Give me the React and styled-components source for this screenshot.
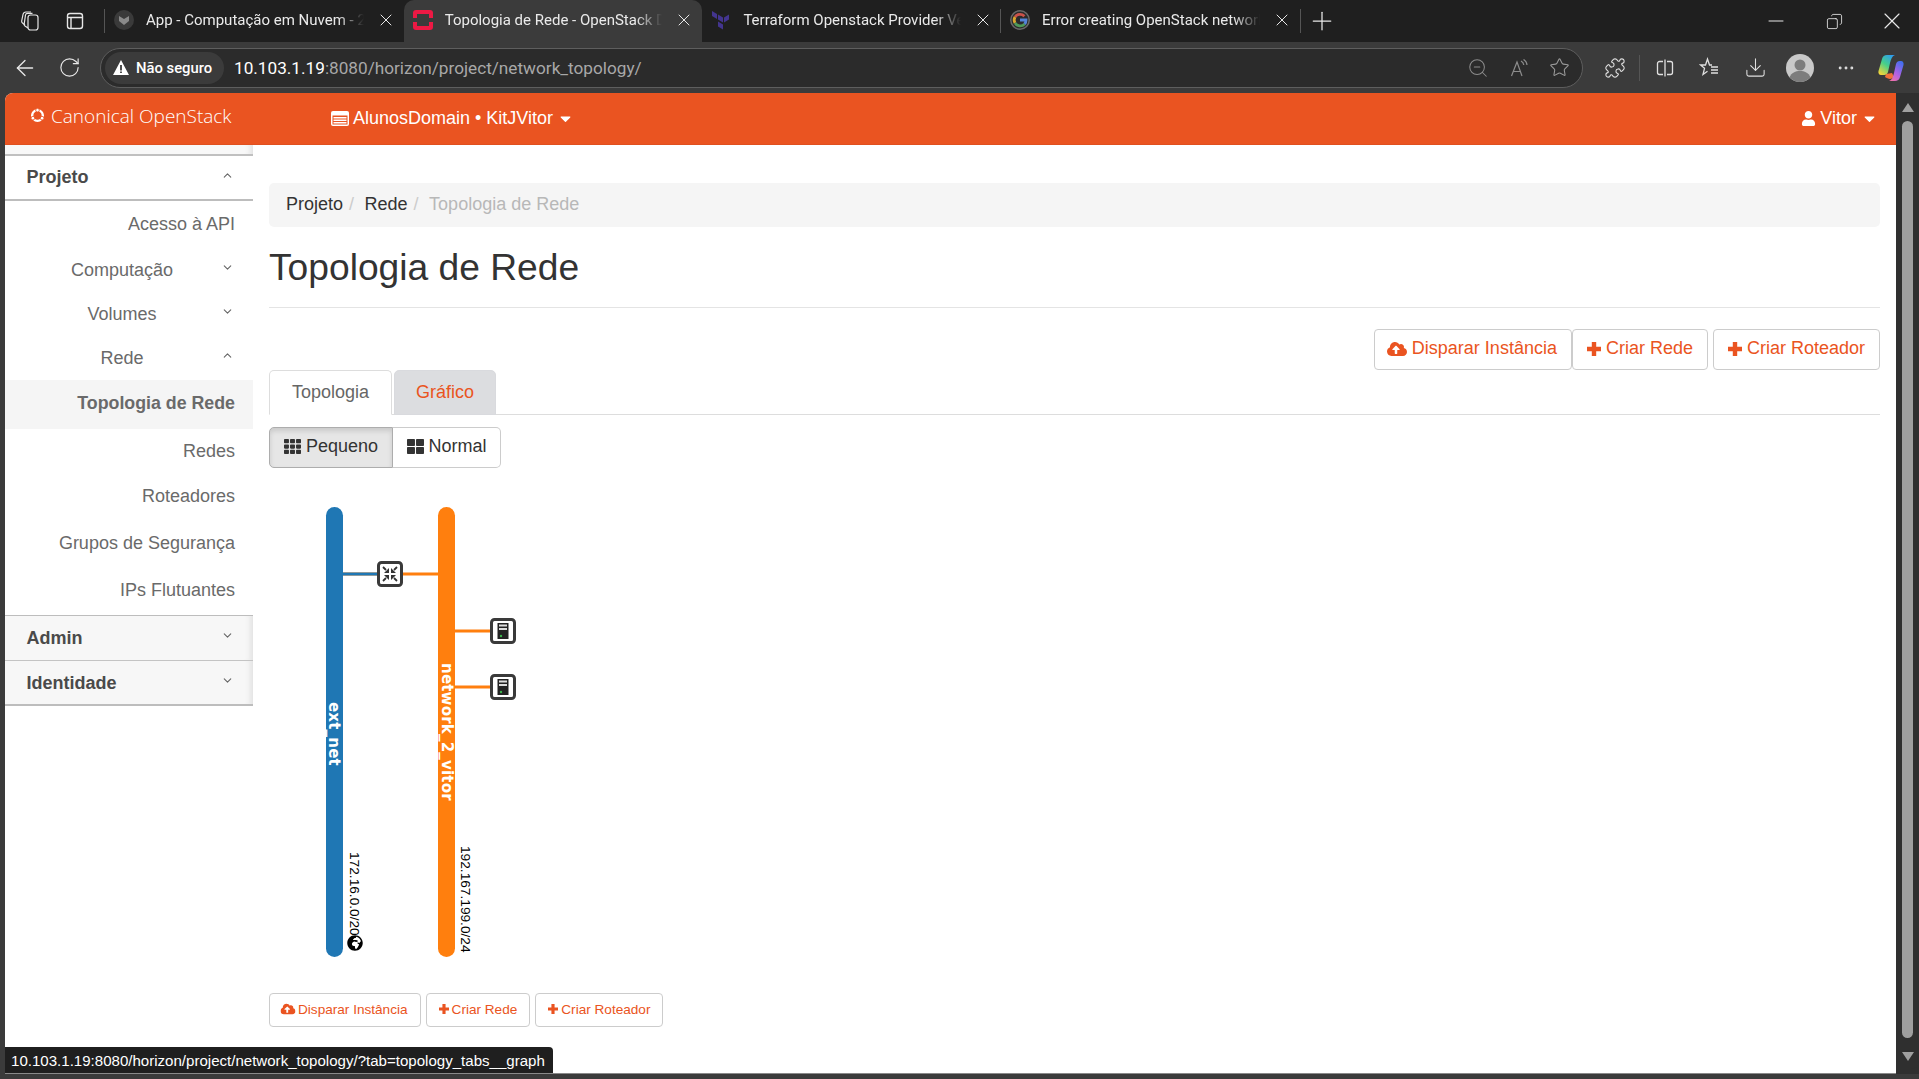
import React from "react";
import styled, { createGlobalStyle } from "styled-components";
import {
  FaCaretDown,
  FaCloudUploadAlt,
  FaGlobeAfrica,
  FaTh,
  FaThLarge,
  FaUser,
} from "react-icons/fa";
import { FiChevronDown, FiChevronUp } from "react-icons/fi";
import {
  ArrowLeft,
  Copy,
  Download,
  Minus,
  MoreHorizontal,
  Plus,
  Puzzle,
  RotateCw,
  Star,
  X,
  ZoomOut,
} from "lucide-react";

const ORANGE = "#ea5421";

const GlobalStyle = createGlobalStyle`
  html, body {
    margin: 0;
    height: 100%;
    overflow: hidden;
    background: #3b3b3b;
    font-family: "Liberation Sans", Arial, sans-serif;
  }
  * { box-sizing: border-box; }
`;

const TabsIcon = () => (
  <svg width="20" height="22" viewBox="0 0 20 22" fill="none" stroke="#e6e6e6" strokeWidth="1.2">
    <rect x="8" y="5" width="10" height="15" rx="2.5" />
    <path d="M8 18 5 16c-.8-.6-1-1.300-.8-2.200L5.500 5c.2-1 1-1.600 2-1.600h5" />
    <path d="M5 15 2.500 13c-.8-.6-1-1.300-.8-2.200L3 4.500C3.200 3.500 4 2 6 2h5" />
  </svg>
);

const SidebarIcon = () => (
  <svg width="20" height="20" viewBox="0 0 20 20" fill="none" stroke="#e6e6e6" strokeWidth="1.4">
    <rect x="2.500" y="2.500" width="15" height="15" rx="2.500" />
    <path d="M2.500 6.500h15M6 6.500v11" />
  </svg>
);

const OpenStackFavicon = () => (
  <svg width="20" height="20" viewBox="0 0 20 20">
    <rect width="20" height="20" rx="3" fill="#ed1944" />
    <rect x="4" y="4" width="12" height="12" fill="#3b3b3b" />
    <rect x="0" y="8" width="5" height="4" fill="#3b3b3b" />
    <rect x="15" y="8" width="5" height="4" fill="#3b3b3b" />
  </svg>
);

const VFavicon = () => (
  <svg width="20" height="20" viewBox="0 0 20 20">
    <circle cx="10" cy="10" r="10" fill="#3a3a3a" />
    <path d="M5 6l5 3v6L5 11zM15 6l-5 3v6l5-4z" fill="#8a8a8a" />
  </svg>
);

const TerraformFavicon = () => (
  <svg width="20" height="20" viewBox="0 0 20 20" fill="#43358f">
    <path d="M1 1l5 3v5L1 6zM7 4.500l5 3v5l-5-3zM13 7.500l5-3v5l-5 3zM7 11.500l5 3v5l-5-3z" />
  </svg>
);

const GoogleFavicon = () => (
  <svg width="20" height="20" viewBox="0 0 20 20" fill="none" strokeWidth="2.800">
    <circle cx="10" cy="10" r="10" fill="#6a6a6a" />
    <circle cx="10" cy="10" r="8.500" fill="#2b2b2b" />
    <path d="M14.400 6.200A6 6 0 0 0 5 7" stroke="#c9524a" />
    <path d="M5 7a6 6 0 0 0 0 6" stroke="#d9a52e" />
    <path d="M5 13a6 6 0 0 0 9.600 1" stroke="#4f9a5a" />
    <path d="M14.600 14A6 6 0 0 0 16 10H10" stroke="#5484d8" />
  </svg>
);

const ReadAloudIcon = () => (
  <svg width="20" height="20" viewBox="0 0 20 20" fill="none" stroke="#8c8c8c" strokeWidth="1.200">
    <path d="M2.500 18 8 4l5 14M4.300 13.500h7.400" />
    <path d="M12 3c1.600.8 2.600 2.400 2.800 4M14.500 1.500c2 1.200 3.300 3.300 3.500 5.500" />
  </svg>
);

const SplitIcon = () => (
  <svg width="20" height="20" viewBox="0 0 20 20" fill="none" stroke="#e0e0e0" strokeWidth="1.300">
    <path d="M8 3.500H4.500a2 2 0 0 0-2 2v9a2 2 0 0 0 2 2H8M12 3.500h3.500a2 2 0 0 1 2 2v9a2 2 0 0 1-2 2H12M10 1.500v17" />
  </svg>
);

const FavoritesIcon = () => (
  <svg width="21" height="21" viewBox="0 0 21 21" fill="none" stroke="#e0e0e0" strokeWidth="1.300">
    <path d="M13 8h-2.500L8.500 2 6.500 8H1.500l4 3.300L4 17.500l4.500-3.200" />
    <path d="M12 10h7M12 13h7M12 16h7" />
  </svg>
);

const ProfileAvatar = () => (
  <svg width="28" height="28" viewBox="0 0 28 28">
    <circle cx="14" cy="14" r="14" fill="#c9c9c9" />
    <circle cx="14" cy="11" r="5.500" fill="#7d7d7d" />
    <path d="M3.500 23.200c2-4.400 6-6.200 10.500-6.200s8.500 1.800 10.500 6.200A14 14 0 0 1 14 28a14 14 0 0 1-10.500-4.800z" fill="#7d7d7d" />
  </svg>
);

const CopilotIcon = () => (
  <svg width="26" height="28" viewBox="0 0 26 28">
    <defs>
      <linearGradient id="copA" x1="0.800" y1="0" x2="0.200" y2="1">
        <stop offset="0" stopColor="#2f9cf0" />
        <stop offset="0.5" stopColor="#45cf8a" />
        <stop offset="1" stopColor="#f3d53a" />
      </linearGradient>
      <linearGradient id="copB" x1="0.800" y1="0" x2="0.200" y2="1">
        <stop offset="0" stopColor="#3f6ff0" />
        <stop offset="0.6" stopColor="#b262e4" />
        <stop offset="1" stopColor="#f072a8" />
      </linearGradient>
    </defs>
    <path d="M9 1h8c-3 1-4 4-5 8l-2 9c-.500 2-2 3-3.500 3H3C1 21 0 19 .500 17L4 5C4.600 2.500 6.500 1 9 1z" fill="url(#copA)" />
    <path d="M7 23c3 2 6 3 9 0l-2-4-6 1z" fill="#f0703a" />
    <path d="M17 27h-6c3-1 4-4 5-8l2-9c.500-2 2-3 3.500-3H23c2 0 3 2 2.500 4L22 23c-.600 2.500-2.500 4-5 4z" fill="url(#copB)" />
  </svg>
);

const CrossIcon = ({ size }) => (
  <svg width={size} height={size} viewBox="0 0 14 14" fill="currentColor">
    <path d="M4.800 0h4.400v4.800H14v4.400H9.200V14H4.800V9.200H0V4.800h4.800z" />
  </svg>
);

const RouterNode = ({ x, y }) => (
  <g transform={`translate(${x - 11.500},${y - 11.500})`}>
    <rect x="0" y="0" width="23" height="23" rx="3" fill="#fff" stroke="#3a3a3a" strokeWidth="3" />
    <g stroke="#333" strokeWidth="1.800" fill="#333">
      <path d="M4.500 4.500l3 3M18.500 4.500l-3 3M4.500 18.500l3-3M18.500 18.500l-3-3" />
      <path strokeWidth="0" d="M10.500 5.500v5h-5zM12.500 5.500v5h5zM10.500 17.500v-5h-5zM12.500 17.500v-5h5z" />
    </g>
  </g>
);

const InstanceNode = ({ x, y }) => (
  <g transform={`translate(${x - 11.500},${y - 11.500})`}>
    <rect x="0" y="0" width="23" height="23" rx="3" fill="#fff" stroke="#3a3a3a" strokeWidth="3" />
    <rect x="6" y="3.500" width="11" height="16" fill="#222" />
    <rect x="7.500" y="5" width="8" height="2" fill="#ddd" />
    <rect x="7.500" y="8.500" width="8" height="2" fill="#ddd" />
    <circle cx="9.500" cy="16.500" r="1.200" fill="#3cb44b" />
  </g>
);

const navItems = [
  { label: "Acesso à API", level: "leaf", height: 47 },
  { label: "Computação", level: "group", chevron: "down", height: 44 },
  { label: "Volumes", level: "group", chevron: "down", height: 44 },
  { label: "Rede", level: "group", chevron: "up", height: 44 },
  { label: "Topologia de Rede", level: "leaf", active: true, height: 49 },
  { label: "Redes", level: "leaf", height: 44.5 },
  { label: "Roteadores", level: "leaf", height: 46.5 },
  { label: "Grupos de Segurança", level: "leaf", height: 47 },
  { label: "IPs Flutuantes", level: "leaf", height: 46.5 },
];

const browserTabs = [
  { title: "App - Computação em Nuvem - 2", icon: <VFavicon /> },
  { title: "Topologia de Rede - OpenStack Dashboard", icon: <OpenStackFavicon />, active: true },
  { title: "Terraform Openstack Provider Version", icon: <TerraformFavicon />, divider: true },
  { title: "Error creating OpenStack network", icon: <GoogleFavicon /> },
];

const ActionButtons = ({ small }) => (
  <>
    <ActionButton $small={small} $cloud>
      <FaCloudUploadAlt size={small ? 12 : 16} style={{ transform: "scale(1.25)" }} />
      Disparar Instância
    </ActionButton>
    <ActionButton $small={small} $tight={!small}>
      <CrossIcon size={small ? 10 : 14} /> Criar Rede
    </ActionButton>
    <ActionButton $small={small}>
      <CrossIcon size={small ? 10 : 14} /> Criar Roteador
    </ActionButton>
  </>
);

const TopologyGraph = () => (
  <Graph width="260" height="500" viewBox="0 0 260 500">
    <line x1="70" y1="100" x2="170" y2="100" stroke="#ff7f0e" strokeWidth="3" />
    <line x1="70" y1="100" x2="115" y2="100" stroke="#1f77b4" strokeWidth="3" />
    <line x1="180" y1="157" x2="230" y2="157" stroke="#ff7f0e" strokeWidth="3" />
    <line x1="180" y1="213" x2="230" y2="213" stroke="#ff7f0e" strokeWidth="3" />

    <rect x="57" y="33" width="17" height="450" rx="8.500" fill="#1f77b4" />
    <rect x="169" y="33" width="17" height="450" rx="8.500" fill="#ff7f0e" />

    <RouterNode x={121} y={100} />
    <InstanceNode x={234} y={157} />
    <InstanceNode x={234} y={213} />

    <NetName transform="translate(60,228) rotate(90)">ext_net</NetName>
    <NetName transform="translate(173,189) rotate(90)">network_2_vitor</NetName>
    <Cidr transform="translate(80.500,378) rotate(90)">172.16.0.0/20</Cidr>
    <Cidr transform="translate(192,372) rotate(90)">192.167.199.0/24</Cidr>
    <circle cx="86" cy="469" r="8" fill="#fff" />
    <FaGlobeAfrica x="78" y="461" size={16} color="#000" />
  </Graph>
);

export default function App() {
  return (
    <>
      <GlobalStyle />
      <Window>
        <TabStrip>
          <StripIcon $first>
            <TabsIcon />
          </StripIcon>
          <StripIcon>
            <SidebarIcon />
          </StripIcon>
          <StripDivider />
          {browserTabs.map((tab) => (
            <BrowserTab key={tab.title} $active={tab.active} $divider={tab.divider}>
              {tab.icon}
              <TabTitle>{tab.title}</TabTitle>
              <X size={20} strokeWidth={1.2} color="#e8e8e8" />
            </BrowserTab>
          ))}
          <StripDivider $end />
          <NewTab>
            <Plus size={30} strokeWidth={1} color="#e8e8e8" />
          </NewTab>
          <WindowControls>
            <WindowButton>
              <Minus size={24} strokeWidth={1} color="#e8e8e8" />
            </WindowButton>
            <WindowButton>
              <Copy size={17} strokeWidth={1.200} color="#e8e8e8" style={{ transform: "scaleX(-1)" }} />
            </WindowButton>
            <WindowButton>
              <X size={28} strokeWidth={1} color="#e8e8e8" />
            </WindowButton>
          </WindowControls>
        </TabStrip>

        <Toolbar>
          <ToolIcon>
            <ArrowLeft size={26} strokeWidth={1.200} color="#e8e8e8" />
          </ToolIcon>
          <ToolIcon>
            <RotateCw size={23} strokeWidth={1.200} color="#e8e8e8" />
          </ToolIcon>
          <AddressBar>
            <SecurityChip>
              <WarnTriangle viewBox="0 0 16 15" width="16" height="15">
                <path d="M8 0l8 15H0z" fill="#fff" />
                <path d="M7.200 5h1.600v5.500H7.200zM7.200 11.500h1.600v1.600H7.200z" fill="#222" />
              </WarnTriangle>
              Não seguro
            </SecurityChip>
            <Url>
              <UrlHost>10.103.1.19</UrlHost>:8080/horizon/project/network_topology/
            </Url>
            <AddressIcons>
              <ZoomOut size={22} strokeWidth={1.100} color="#8c8c8c" />
              <ReadAloudIcon />
              <Star size={21} strokeWidth={1.200} color="#9a9a9a" />
            </AddressIcons>
          </AddressBar>
          <ToolIcons>
            <ToolSlot>
              <Puzzle size={22} strokeWidth={1.200} color="#e0e0e0" />
            </ToolSlot>
            <ToolDivider />
            <ToolSlot>
              <SplitIcon />
            </ToolSlot>
            <ToolSlot>
              <FavoritesIcon />
            </ToolSlot>
            <ToolSlot>
              <Download size={23} strokeWidth={1.100} color="#e0e0e0" />
            </ToolSlot>
            <ToolSlot>
              <ProfileAvatar />
            </ToolSlot>
            <ToolSlot>
              <MoreHorizontal size={20} strokeWidth={1.500} color="#e0e0e0" />
            </ToolSlot>
            <ToolSlot>
              <CopilotIcon />
            </ToolSlot>
          </ToolIcons>
        </Toolbar>

        <Viewport>
          <Page>
            <Navbar>
              <Brand>
                <BrandMark viewBox="0 0 14 14" width="15" height="15">
                  <circle cx="7" cy="7" r="5" fill="none" stroke="#fff" strokeWidth="2.200" />
                  <circle cx="7" cy="2" r="1.700" fill="#fff" stroke={ORANGE} strokeWidth="0.800" />
                  <circle cx="2.700" cy="9.500" r="1.700" fill="#fff" stroke={ORANGE} strokeWidth="0.800" />
                  <circle cx="11.300" cy="9.500" r="1.700" fill="#fff" stroke={ORANGE} strokeWidth="0.800" />
                </BrandMark>
                Canonical OpenStack
              </Brand>
              <ProjectPicker>
                <ListBadge viewBox="0 0 18 15" width="18" height="15">
                  <rect width="18" height="15" rx="2" fill="#fff" />
                  <path d="M1.500 4.500h15v9h-15z" fill={ORANGE} />
                  <path d="M2.500 6h13v1.500h-13zM2.500 8.500h13V10h-13zM2.500 11h13v1.500h-13z" fill="#fff" />
                </ListBadge>
                AlunosDomain • KitJVitor
                <FaCaretDown size={17} />
              </ProjectPicker>
              <UserMenu>
                <FaUser size={15} /> Vitor
                <FaCaretDown size={17} />
              </UserMenu>
            </Navbar>

            <Body>
              <Sidebar>
                <SidebarCap />
                <Section $open>
                  Projeto
                  <SectionChevronUp />
                </Section>
                <NavList>
                  {navItems.map((item) => (
                    <NavItem key={item.label} $active={item.active} $level={item.level} $height={item.height}>
                      {item.label}
                      {item.chevron === "down" && <ChevronDown />}
                      {item.chevron === "up" && <ChevronUp />}
                    </NavItem>
                  ))}
                </NavList>
                <ClosedSections>
                  <Section>
                    Admin
                    <SectionChevronDown />
                  </Section>
                  <Section $last>
                    Identidade
                    <SectionChevronDown />
                  </Section>
                </ClosedSections>
              </Sidebar>

              <Content>
                <Breadcrumb>
                  <Crumb>Projeto</Crumb>
                  <CrumbSep>/</CrumbSep>
                  <Crumb>Rede</Crumb>
                  <CrumbSep>/</CrumbSep>
                  <Crumb $current>Topologia de Rede</Crumb>
                </Breadcrumb>
                <PageHeader>
                  <Title>Topologia de Rede</Title>
                </PageHeader>
                <ActionsRow>
                  <ActionButtons />
                </ActionsRow>
                <Tabs>
                  <Tab $active>Topologia</Tab>
                  <Tab $muted>Gráfico</Tab>
                </Tabs>
                <SizeGroup>
                  <SizeButton $active>
                    <FaTh size={17} /> Pequeno
                  </SizeButton>
                  <SizeButton>
                    <FaThLarge size={17} /> Normal
                  </SizeButton>
                </SizeGroup>
                <TopologyGraph />
                <BottomActions>
                  <ActionButtons small />
                </BottomActions>
              </Content>
            </Body>

            <StatusBubble>10.103.1.19:8080/horizon/project/network_topology/?tab=topology_tabs__graph</StatusBubble>
          </Page>

          <Scrollbar>
            <ScrollArrow />
            <ScrollThumb />
            <ScrollArrow $down />
          </Scrollbar>
        </Viewport>
      </Window>
    </>
  );
}

const Window = styled.div`
  width: 1919px;
  height: 1079px;
  display: flex;
  flex-direction: column;
  overflow: hidden;
  background: #3b3b3b;
`;

const TabStrip = styled.div`
  height: 42px;
  flex: none;
  display: flex;
  align-items: center;
  background: #1f1f1f;
`;

const StripIcon = styled.div`
  width: 20px;
  height: 20px;
  flex: none;
  display: flex;
  align-items: center;
  margin-left: ${(props) => (props.$first ? "20px" : "25px")};
`;

const StripDivider = styled.div`
  width: 1px;
  height: 24px;
  margin-left: ${(props) => (props.$end ? "0" : "19px")};
  background: #555;
  flex: none;
`;

const BrowserTab = styled.div`
  width: 298.700px;
  height: 42px;
  flex: none;
  display: flex;
  align-items: center;
  gap: 12px;
  padding: 0 0 2px 9px;
  border-radius: 10px 10px 0 0;
  background: ${(props) => (props.$active ? "#3b3b3b" : "transparent")};
  color: #eaeaea;
  font-family: "Roboto", "Liberation Sans", sans-serif;
  font-size: 15px;
  position: relative;

  ${(props) =>
    props.$divider &&
    `&::after {
      content: "";
      position: absolute;
      right: 0;
      top: 9px;
      width: 1px;
      height: 24px;
      background: #555;
    }`}

  svg:last-child {
    margin-right: 8px;
    flex: none;
  }
  svg:first-child {
    flex: none;
  }
`;

const TabTitle = styled.span`
  flex: 1;
  min-width: 0;
  white-space: nowrap;
  overflow: hidden;
  -webkit-mask-image: linear-gradient(to right, #000 88%, transparent);
  mask-image: linear-gradient(to right, #000 88%, transparent);
`;

const NewTab = styled.div`
  display: flex;
  margin-left: 6px;
`;

const WindowControls = styled.div`
  margin-left: auto;
  margin-right: -2px;
  display: flex;
  align-items: center;
`;

const WindowButton = styled.div`
  width: 58px;
  display: flex;
  justify-content: center;
`;

const Toolbar = styled.div`
  height: 51px;
  flex: none;
  display: flex;
  align-items: center;
  background: #3b3b3b;
`;

const ToolIcon = styled.div`
  width: 45px;
  display: flex;
  justify-content: center;
  &:first-child {
    margin-left: 2px;
  }
`;

const AddressBar = styled.div`
  width: 1483px;
  height: 40px;
  margin-left: 8px;
  flex: none;
  display: flex;
  align-items: center;
  padding-left: 4px;
  border: 1px solid #5e5e5e;
  border-radius: 20px;
  background: #2b2b2b;
`;

const SecurityChip = styled.div`
  width: 119px;
  height: 32px;
  flex: none;
  display: flex;
  align-items: center;
  gap: 7px;
  padding: 0 8px;
  border-radius: 16px;
  background: #3b3b3b;
  color: #fff;
  font-family: "Roboto", "Liberation Sans", sans-serif;
  font-size: 14.800px;
  font-weight: 500;
  white-space: nowrap;
`;

const WarnTriangle = styled.svg`
  flex: none;
`;

const Url = styled.div`
  margin-left: 10px;
  color: #a8a8a8;
  font-family: "Roboto", "Liberation Sans", sans-serif;
  font-size: 17.200px;
`;

const UrlHost = styled.span`
  color: #fff;
`;

const AddressIcons = styled.div`
  margin-left: auto;
  padding-right: 12px;
  display: flex;
  align-items: center;
  gap: 20px;
`;

const ToolIcons = styled.div`
  flex: 1;
  padding-left: 9px;
  display: flex;
  align-items: center;
`;

const ToolSlot = styled.div`
  width: 45.200px;
  flex: none;
  display: flex;
  justify-content: center;
`;

const ToolDivider = styled.div`
  width: 1px;
  height: 26px;
  margin: 0 2px;
  flex: none;
  background: #555;
`;

const Viewport = styled.div`
  position: relative;
  height: 981px;
  flex: none;
  margin-left: 5px;
  padding-bottom: 5px;
  display: flex;
  background: #2f2f2f;
  border-radius: 8px 0 0 0;
`;

const Page = styled.div`
  position: relative;
  width: 1891px;
  height: 981px;
  flex: none;
  overflow: hidden;
  background: #fff;
  border-radius: 8px 0 0 0;
  border-bottom: 1px solid #8a8a8a;
`;

const Navbar = styled.div`
  height: 52px;
  display: flex;
  align-items: center;
  background: ${ORANGE};
  color: #fff;
  border-bottom: 1px solid #e0501f;
`;

const Brand = styled.div`
  width: 326px;
  padding: 0 0 6px 25px;
  display: flex;
  align-items: center;
  gap: 6px;
  font-family: "Open Sans", "Liberation Sans", sans-serif;
  font-size: 19px;
  font-weight: 300;
  white-space: nowrap;
`;

const BrandMark = styled.svg`
  flex: none;
`;

const ProjectPicker = styled.div`
  display: flex;
  align-items: center;
  gap: 4px;
  font-size: 18px;
  white-space: nowrap;
`;

const ListBadge = styled.svg`
  flex: none;
`;

const UserMenu = styled.div`
  margin-left: auto;
  padding-right: 18px;
  display: flex;
  align-items: center;
  gap: 4px;
  font-size: 18px;
`;

const Body = styled.div`
  display: flex;
  align-items: flex-start;
`;

const Sidebar = styled.nav`
  width: 248px;
  flex: none;
`;

const SidebarCap = styled.div`
  height: 11px;
  background: #f8f8f8;
  border-bottom: 2px solid #c0c0c0;
  box-shadow: inset -8px 0 6px -6px #ddd;
`;

const Section = styled.div`
  height: 45px;
  display: flex;
  align-items: center;
  justify-content: space-between;
  padding: ${(props) => (props.$last ? "1px" : "0")} 19px 0 21.500px;
  color: #4a4a4a;
  font-size: 18px;
  font-weight: 700;
  background: ${(props) => (props.$open ? "#fff" : "#f7f7f7")};
  border-bottom: ${(props) => (props.$open || props.$last ? "2px solid #bdbdbd" : "1px solid #c4c4c4")};
  box-shadow: ${(props) => (props.$open ? "none" : "inset -8px 0 6px -6px #ddd")};
`;

const SectionChevronUp = styled(FiChevronUp).attrs({ size: 13, color: "#666" })`
  margin-bottom: 5px;
`;

const SectionChevronDown = styled(FiChevronDown).attrs({ size: 13, color: "#666" })`
  margin-bottom: 5px;
`;

const NavList = styled.div`
  display: flex;
  flex-direction: column;
  height: 414px;
`;

const NavItem = styled.div`
  position: relative;
  height: ${(props) => props.$height}px;
  flex: none;
  display: flex;
  align-items: center;
  justify-content: ${(props) => (props.$level === "group" ? "center" : "flex-end")};
  padding-right: ${(props) => (props.$level === "group" ? "14px" : "18px")};
  padding-bottom: ${(props) => (props.$active ? "3px" : "0")};
  color: #6a6a6a;
  background: ${(props) => (props.$active ? "#f5f5f5" : "transparent")};
  font-size: ${(props) => (props.$active ? "17.800px" : "18px")};
  font-weight: ${(props) => (props.$active ? 700 : 400)};
`;

const ChevronDown = styled(FiChevronDown).attrs({ size: 13, color: "#666" })`
  position: absolute;
  right: 19px;
  top: 13px;
`;

const ChevronUp = styled(FiChevronUp).attrs({ size: 13, color: "#666" })`
  position: absolute;
  right: 19px;
  top: 13px;
`;

const ClosedSections = styled.div`
  border-top: 1px solid #bdbdbd;
`;

const Content = styled.main`
  flex: 1;
  min-width: 0;
  padding: 38px 16px 0;
`;

const Breadcrumb = styled.div`
  height: 44px;
  display: flex;
  align-items: center;
  gap: 6px;
  padding: 0 17px 2px;
  border-radius: 5px;
  background: #f5f5f5;
  font-size: 18px;
`;

const Crumb = styled.span`
  color: ${(props) => (props.$current ? "#b8b8b8" : "#333")};
`;

const CrumbSep = styled.span`
  color: #ccc;
  padding-right: 4.500px;
`;

const PageHeader = styled.div`
  height: 81px;
  padding-top: 1px;
  display: flex;
  align-items: center;
  border-bottom: 1px solid #e4e4e4;
`;

const Title = styled.h1`
  margin: 0;
  color: #333;
  font-size: 37.200px;
  font-weight: 400;
`;

const ActionsRow = styled.div`
  display: flex;
  justify-content: flex-end;
  gap: 5px;
  margin-top: 21px;
`;

const actionGap = ({ $small, $cloud }) => {
  if ($cloud) return $small ? "4px" : "6.500px";
  return $small ? "3px" : "5px";
};

const ActionButton = styled.button`
  height: ${(props) => (props.$small ? "34px" : "41px")};
  display: inline-flex;
  align-items: center;
  gap: ${actionGap};
  padding: 0 ${(props) => (props.$small ? "12px" : "14px")} 2px;
  margin-left: ${(props) => (props.$tight ? "-5px" : "0")};
  border: 1px solid #ccc;
  border-radius: 4px;
  background: #fff;
  color: ${ORANGE};
  font-family: "Liberation Sans", Arial, sans-serif;
  font-size: ${(props) => (props.$small ? "13.600px" : "18px")};
  white-space: nowrap;
`;

const Tabs = styled.div`
  height: 45px;
  display: flex;
  gap: 2px;
  align-items: flex-end;
  border-bottom: 1px solid #ddd;
`;

const Tab = styled.div`
  height: 45px;
  display: flex;
  align-items: center;
  padding: 0 ${(props) => (props.$active ? "22px" : "21px")} 1px;
  border: 1px solid ${(props) => (props.$active ? "#ddd" : "#d9dade")};
  border-bottom: 1px solid ${(props) => (props.$active ? "#fff" : "#d9dade")};
  border-radius: 5px 5px 0 0;
  margin-bottom: -1px;
  background: ${(props) => (props.$active ? "#fff" : "#dcdde0")};
  color: ${(props) => (props.$active ? "#666" : ORANGE)};
  font-size: 18px;
`;

const SizeGroup = styled.div`
  display: flex;
  margin-top: 12px;
`;

const SizeButton = styled.div`
  height: 41px;
  display: flex;
  align-items: center;
  gap: 5px;
  padding: 0 ${(props) => (props.$active ? "14px" : "13.500px")} 2px;
  border: 1px solid ${(props) => (props.$active ? "#adadad" : "#ccc")};
  border-left-width: ${(props) => (props.$active ? "1px" : "0")};
  border-radius: ${(props) => (props.$active ? "5px 0 0 5px" : "0 5px 5px 0")};
  background: ${(props) => (props.$active ? "#e6e6e6" : "#fff")};
  box-shadow: ${(props) => (props.$active ? "inset 0 3px 5px rgba(0,0,0,.125)" : "none")};
  color: #333;
  font-size: 18px;
`;

const Graph = styled.svg`
  display: block;
  overflow: visible;
  margin-top: 6px;
`;

const NetName = styled.text`
  fill: #fff;
  font-family: "DejaVu Sans", sans-serif;
  font-size: 15px;
  font-weight: 700;
  letter-spacing: 0.200px;
`;

const Cidr = styled.text`
  fill: #000;
  font-family: "Liberation Sans", Arial, sans-serif;
  font-size: 13.700px;
`;

const BottomActions = styled.div`
  display: flex;
  gap: 5px;
  margin-top: 19px;
`;

const StatusBubble = styled.div`
  position: absolute;
  left: 0;
  bottom: -1px;
  height: 27px;
  display: flex;
  align-items: center;
  padding: 0 8px 0 6px;
  border-radius: 0 4px 0 0;
  background: #1f1f1f;
  color: #fff;
  font-size: 15.070px;
  white-space: nowrap;
`;

const Scrollbar = styled.div`
  width: 23px;
  flex: none;
  display: flex;
  flex-direction: column;
  align-items: center;
  padding: 10px 0 8px;
  background: #2f2f2f;
  border-radius: 0 8px 8px 0;
`;

const ScrollArrow = styled.div`
  width: 0;
  height: 0;
  flex: none;
  border-left: 6px solid transparent;
  border-right: 6px solid transparent;
  ${(props) => (props.$down ? "border-top: 9px solid #a0a0a0;" : "border-bottom: 9px solid #a0a0a0;")}
`;

const ScrollThumb = styled.div`
  width: 11px;
  flex: 1;
  margin: 9px 0 14px;
  border-radius: 6px;
  background: #9f9f9f;
`;
